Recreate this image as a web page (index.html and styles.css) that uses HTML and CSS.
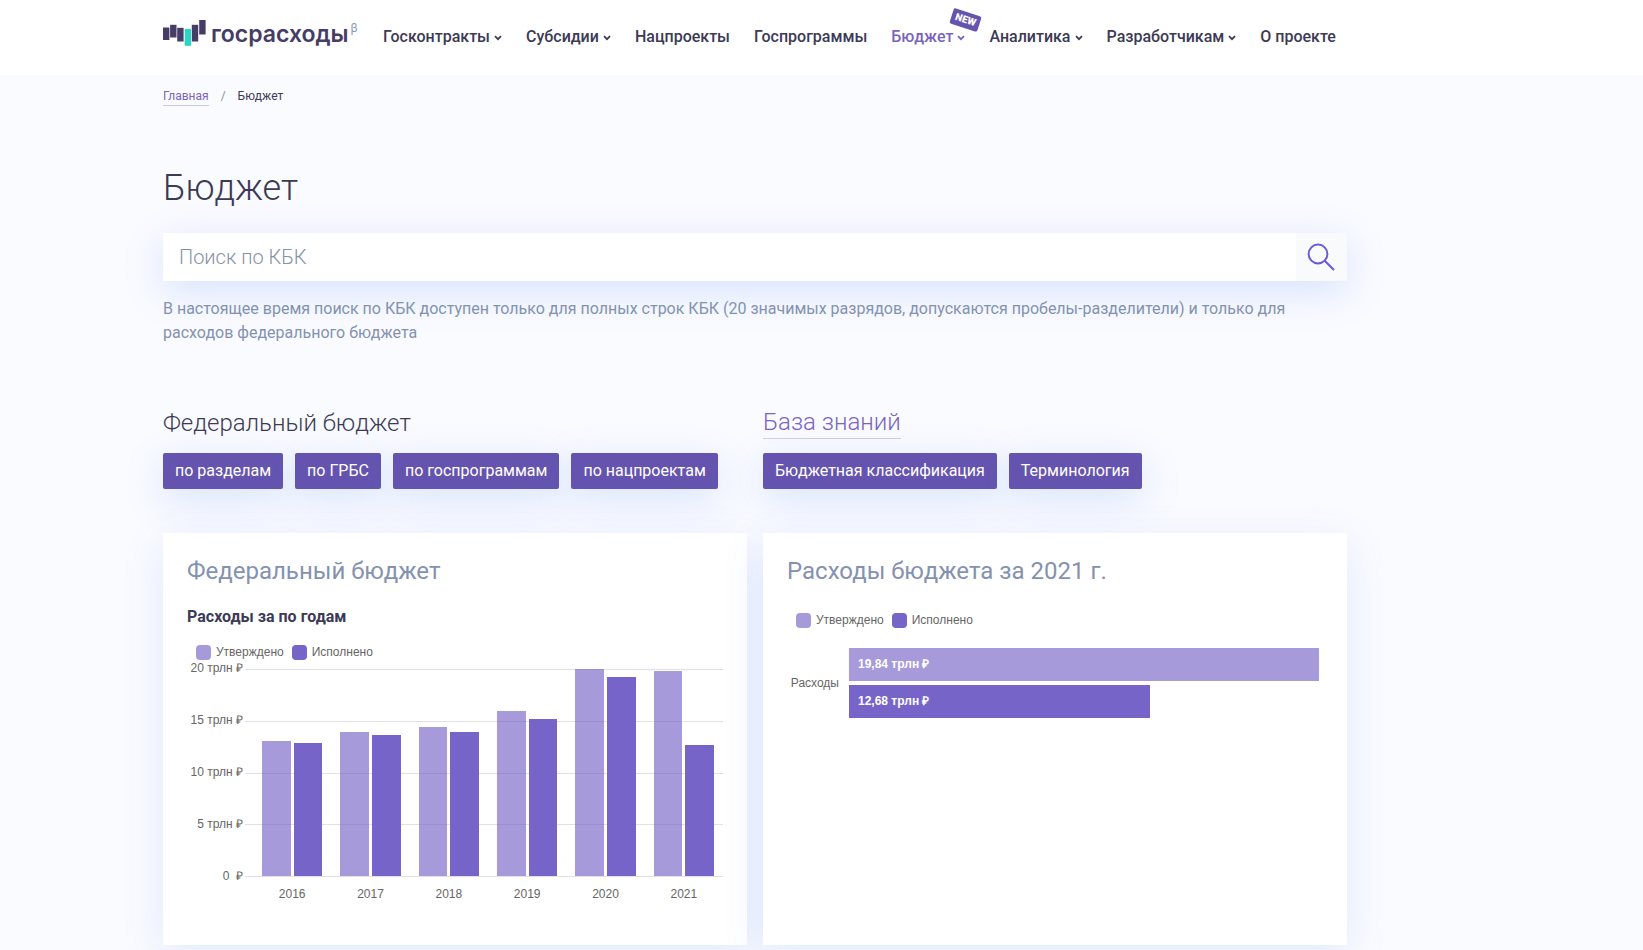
FILE: index.html
```html
<!DOCTYPE html>
<html lang="ru">
<head>
<meta charset="utf-8">
<meta name="viewport" content="width=device-width, initial-scale=1">
<title>Бюджет — Госрасходы</title>
<link rel="stylesheet" href="styles.css">
</head>
<body>
<header class="header">
  <div class="container header-row">
    <a class="logo" href="#">
      <svg class="logo-mark" width="43" height="26" viewBox="0 0 43 26" aria-hidden="true">
        <g fill="#463d66">
          <rect x="0" y="7.5" width="6.4" height="12.5"/>
          <rect x="7.1" y="4.8" width="6.4" height="12.7"/>
          <rect x="14.2" y="7.8" width="6.4" height="13.7"/>
          <rect x="28.8" y="4.8" width="6.4" height="16.7"/>
          <rect x="36.2" y="0" width="6.4" height="14.5"/>
        </g>
        <rect x="21.7" y="9" width="6.4" height="16.8" fill="#2bd4c4"/>
      </svg>
      <span class="logo-text">госрасходы</span>
      <span class="logo-beta">β</span>
    </a>
    <nav class="nav">
      <a class="nav-link" href="#">Госконтракты<svg class="chevron" viewBox="0 0 8 6"><path d="M1 1.2l3 3 3-3"/></svg></a>
      <a class="nav-link" href="#">Субсидии<svg class="chevron" viewBox="0 0 8 6"><path d="M1 1.2l3 3 3-3"/></svg></a>
      <a class="nav-link" href="#">Нацпроекты</a>
      <a class="nav-link" href="#">Госпрограммы</a>
      <a class="nav-link nav-link-active" href="#">Бюджет<svg class="chevron" viewBox="0 0 8 6"><path d="M1 1.2l3 3 3-3"/></svg><span class="badge">NEW</span></a>
      <a class="nav-link" href="#">Аналитика<svg class="chevron" viewBox="0 0 8 6"><path d="M1 1.2l3 3 3-3"/></svg></a>
      <a class="nav-link" href="#">Разработчикам<svg class="chevron" viewBox="0 0 8 6"><path d="M1 1.2l3 3 3-3"/></svg></a>
      <a class="nav-link" href="#">О проекте</a>
    </nav>
  </div>
</header>
<main class="container">
  <nav class="breadcrumbs">
    <a class="crumb-link" href="#">Главная</a>
    <span class="crumb-sep">/</span>
    <span>Бюджет</span>
  </nav>
  <h1 class="title">Бюджет</h1>
  <form class="search">
    <input class="search-input" type="text" placeholder="Поиск по КБК" aria-label="Поиск по КБК">
    <button class="search-button" type="button" aria-label="Найти">
      <svg width="28" height="28" viewBox="0 0 28 28" fill="none" stroke="#6f55dc" stroke-width="2" aria-hidden="true">
        <circle cx="11" cy="11" r="9.4"/>
        <path d="M17.7 17.7L27 27"/>
      </svg>
    </button>
  </form>
  <p class="note">В настоящее время поиск по КБК доступен только для полных строк КБК (20 значимых разрядов, допускаются пробелы-разделители) и только для расходов федерального бюджета</p>

  <div class="columns sections">
    <section>
      <h2 class="section-title">Федеральный бюджет</h2>
      <div class="buttons">
        <a class="button" href="#">по разделам</a>
        <a class="button" href="#">по ГРБС</a>
        <a class="button" href="#">по госпрограммам</a>
        <a class="button" href="#">по нацпроектам</a>
      </div>
    </section>
    <section>
      <h2 class="section-title"><a class="section-link" href="#">База знаний</a></h2>
      <div class="buttons">
        <a class="button" href="#">Бюджетная классификация</a>
        <a class="button" href="#">Терминология</a>
      </div>
    </section>
  </div>

  <div class="columns cards">
    <section class="card">
      <h2 class="card-title">Федеральный бюджет</h2>
      <h3 class="card-subtitle">Расходы за по годам</h3>
      <div class="legend">
        <span class="legend-item"><i class="swatch approved"></i>Утверждено</span>
        <span class="legend-item"><i class="swatch spent"></i>Исполнено</span>
      </div>
      <div class="chart">
        <div class="y-axis">
          <span>20 трлн ₽</span><span>15 трлн ₽</span><span>10 трлн ₽</span><span>5 трлн ₽</span><span>0 &nbsp;₽</span>
        </div>
        <div class="plot">
          <div class="grid-lines"><i></i><i></i><i></i><i></i><i></i></div>
          <div class="bars">
            <div class="group"><i class="bar approved" style="height:65.2%"></i><i class="bar spent" style="height:64.3%"></i></div>
            <div class="group"><i class="bar approved" style="height:69.6%"></i><i class="bar spent" style="height:68.1%"></i></div>
            <div class="group"><i class="bar approved" style="height:72%"></i><i class="bar spent" style="height:69.6%"></i></div>
            <div class="group"><i class="bar approved" style="height:79.8%"></i><i class="bar spent" style="height:75.9%"></i></div>
            <div class="group"><i class="bar approved" style="height:100%"></i><i class="bar spent" style="height:96.2%"></i></div>
            <div class="group"><i class="bar approved" style="height:99.1%"></i><i class="bar spent" style="height:63.4%"></i></div>
          </div>
        </div>
        <div class="x-axis">
          <span>2016</span><span>2017</span><span>2018</span><span>2019</span><span>2020</span><span>2021</span>
        </div>
      </div>
    </section>
    <section class="card">
      <h2 class="card-title">Расходы бюджета за 2021 г.</h2>
      <div class="legend legend-spaced">
        <span class="legend-item"><i class="swatch approved"></i>Утверждено</span>
        <span class="legend-item"><i class="swatch spent"></i>Исполнено</span>
      </div>
      <div class="h-chart">
        <span class="h-label">Расходы</span>
        <div class="h-bars">
          <div class="h-bar approved" style="width:100%">19,84 трлн ₽</div>
          <div class="h-bar spent" style="width:64%">12,68 трлн ₽</div>
        </div>
      </div>
    </section>
  </div>
</main>
</body>
</html>
```
FILE: styles.css
```css
* { box-sizing: border-box; }

body {
  margin: 0;
  background: #fafbff;
  color: #3c3a55;
  font: 400 16px/24px Roboto, "Noto Sans", sans-serif;
}

a { color: inherit; text-decoration: none; }

.container {
  max-width: 1184px;
  margin-left: 163px;
  margin-right: 16px;
}

.header { background: #fff; }

.header-row {
  display: flex;
  align-items: flex-start;
  height: 75px;
}

.logo {
  display: flex;
  width: 196px;
  margin-right: 24px;
  padding-top: 20px;
  color: #463d66;
}

.logo-mark { flex: none; margin-right: 5px; }

.logo-text {
  font: 600 23px/28px Inter, "Open Sans", sans-serif;
}

.logo-beta {
  margin-left: 2px;
  color: #8e9ab4;
  font-size: 12px;
  line-height: 16px;
}

.nav {
  display: flex;
  gap: 24px;
  padding-top: 25px;
  font-weight: 500;
  white-space: nowrap;
}

.nav-link { position: relative; }
.nav-link-active { color: #7a64bf; }

.chevron {
  width: 8px;
  height: 6px;
  margin-left: 4px;
  margin-bottom: 1px;
  fill: none;
  stroke: currentColor;
  stroke-width: 1.8;
}

.badge {
  position: absolute;
  top: -13px;
  right: -15px;
  padding: 0 4px;
  border-radius: 2px;
  background: #6554af;
  color: #fff;
  font-size: 10px;
  font-weight: 900;
  line-height: 16px;
  transform: rotate(18deg);
}

.breadcrumbs {
  display: flex;
  gap: 12px;
  padding-top: 13px;
  font-size: 12px;
  line-height: 17px;
}

.crumb-link {
  border-bottom: 1px solid #cbc8e6;
  color: #7a64bf;
}

.crumb-sep { color: #8492a6; }

.title {
  margin: 59px 0 22px;
  font-size: 36px;
  font-weight: 300;
  line-height: 46px;
}

.search {
  display: flex;
  height: 48px;
  box-shadow: 0 10px 40px rgba(50, 110, 240, 0.18);
}

.search-input {
  flex: 1;
  min-width: 0;
  padding: 0 16px;
  border: 0;
  background: #fff;
  color: inherit;
  font: 300 20px/24px Roboto, "Noto Sans", sans-serif;
}

.search-input::placeholder { color: #8492a6; opacity: 1; }

.search-button {
  display: flex;
  align-items: center;
  justify-content: center;
  width: 51px;
  padding: 0 2px 0 0;
  border: 0;
  background: #f9fafc;
}

.note { margin: 16px 0 0; color: #8492b0; }

.columns {
  display: grid;
  grid-template-columns: 1fr 1fr;
  gap: 16px;
}

.sections { margin-top: 62px; }

.section-title {
  display: flex;
  margin: 0 0 14px;
  font-size: 24px;
  font-weight: 300;
  line-height: 32px;
}

.section-link {
  line-height: 31px;
  border-bottom: 1px solid #d0cfe4;
  color: #7a64bf;
}

.buttons { display: flex; flex-wrap: wrap; gap: 12px; }

.button {
  padding: 6px 12px;
  border-radius: 2px;
  background: #6554af;
  box-shadow: 0 10px 40px rgba(50, 110, 240, 0.18);
  color: #fff;
}

.cards { margin-top: 44px; padding-bottom: 5px; }

.card {
  min-height: 412px;
  padding: 24px;
  background: #fff;
  box-shadow: 0 10px 40px rgba(50, 110, 240, 0.12);
}

.card-title {
  margin: 0 0 20px;
  color: #8492b0;
  font-size: 24px;
  font-weight: 400;
  line-height: 28px;
}

.card-subtitle {
  margin: 0 0 13px;
  font-size: 16px;
  font-weight: 700;
  line-height: 24px;
}

.legend {
  display: flex;
  gap: 8px;
  padding-left: 9px;
  color: #666;
  font: 12px/20px "Liberation Sans", Arial, sans-serif;
}

.legend-spaced { margin-top: 25px; }

.legend-item { display: flex; align-items: center; gap: 5px; }

.swatch { width: 15px; height: 15px; border-radius: 4px; }

.approved { background: rgba(119, 100, 200, 0.65); }
.spent { background: #7764c8; }

.chart {
  display: grid;
  grid-template-columns: 56px 1fr;
  grid-template-rows: 208px 34px;
  column-gap: 2px;
  margin-top: 7px;
  color: #666;
  font: 12px/16px "Liberation Sans", Arial, sans-serif;
}

.y-axis {
  display: flex;
  flex-direction: column;
  justify-content: space-between;
  margin: -9px 0 -7px;
  text-align: right;
  white-space: nowrap;
}

.plot { display: grid; }

.grid-lines,
.bars { grid-area: 1 / 1; }

.grid-lines {
  display: flex;
  flex-direction: column;
  justify-content: space-between;
}

.grid-lines i { height: 1px; background: #e0e0e6; }

.bars,
.x-axis {
  display: grid;
  grid-template-columns: repeat(6, 1fr);
  padding-left: 8px;
}

.bars { height: 207px; }

.group {
  display: flex;
  align-items: flex-end;
  gap: 3px;
  padding: 0 9px;
}

.bar { flex: 1; }

.x-axis {
  grid-column: 2;
  align-items: center;
  text-align: center;
}

.h-chart {
  display: grid;
  grid-template-columns: 52px 1fr;
  column-gap: 10px;
  align-items: center;
  margin: 18px 4px 0 0;
  font: 12px/16px "Liberation Sans", Arial, sans-serif;
}

.h-label { color: #666; text-align: right; }

.h-bars { display: grid; gap: 4px; }

.h-bar {
  height: 33px;
  padding: 8px 9px;
  color: #fff;
  font-weight: 700;
}
```
